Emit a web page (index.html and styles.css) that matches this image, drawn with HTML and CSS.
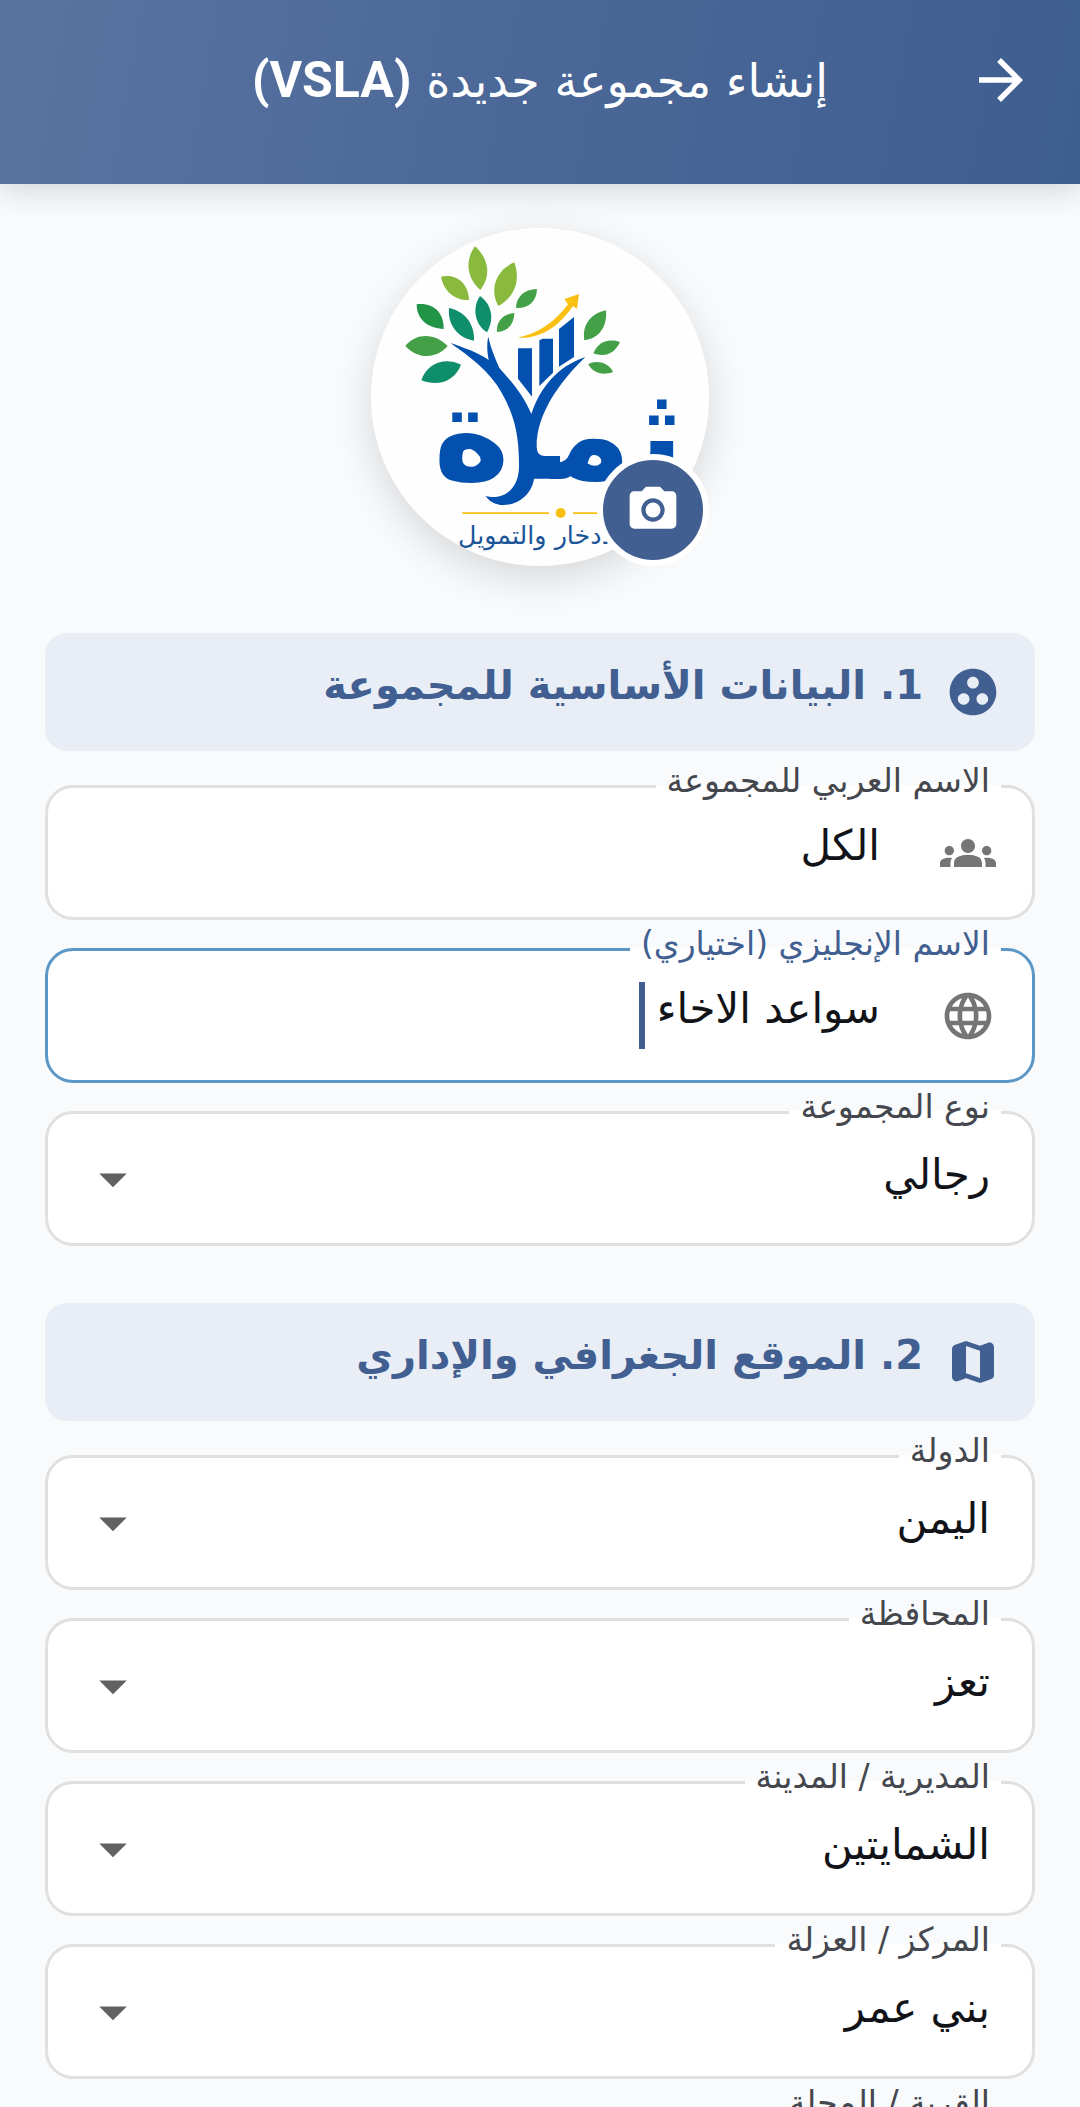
FILE: index.html
```html
<!DOCTYPE html>
<html lang="ar" dir="rtl">
<head>
 <meta charset="UTF-8">
 <meta name="viewport" content="width=device-width, initial-scale=1.0">
 <title>إنشاء مجموعة جديدة (VSLA)</title>
 <link rel="stylesheet" href="styles.css">
</head>
<body>
 <header class="topbar">
  <button class="back-button" type="button" aria-label="رجوع">
   <svg viewBox="0 0 24 24"><path d="M12 4l-1.41 1.41L16.17 11H4v2h12.17l-5.58 5.59L12 20l8-8z"/></svg>
  </button>
  <h1>إنشاء مجموعة جديدة <span class="latin">(VSLA)</span></h1>
 </header>

 <main class="content">
  <div class="avatar">
   <svg class="avatar-logo" viewBox="33 54 1014 1014" role="img" aria-label="ثمرة">
    <!-- листья -->
    <g fill="#8aba3d">
     <path d="M345 109C390 150 392 200 361 240C315 200 318 145 345 109z"/>
     <path d="M463 157C482 210 465 260 415 288C388 240 406 180 463 157z"/>
     <path d="M243 200C290 190 325 220 327 270C285 272 252 245 243 200z"/>
    </g>
    <g fill="#43a047">
     <path d="M531 237C530 275 505 296 468 294C468 262 492 238 531 237z"/>
     <path d="M463 309C462 343 443 364 411 366C408 335 428 312 463 309z"/>
     <path d="M136 407C170 368 225 368 263 408C230 448 170 448 136 407z"/>
     <path d="M738 301C742 350 718 385 673 391C665 345 693 310 738 301z"/>
     <path d="M780 396C765 430 735 443 700 430C715 395 745 385 780 396z"/>
     <path d="M685 463C705 450 745 455 759 486C730 497 698 490 685 463z"/>
    </g>
    <path fill="#219447" d="M170 283C220 277 252 308 251 357C205 355 170 330 170 283z"/>
    <g fill="#0f8e6c">
     <path d="M360 258C398 285 402 330 381 367C345 345 335 295 360 258z"/>
     <path d="M267 294C318 305 344 345 342 392C295 385 262 345 267 294z"/>
     <path d="M303 464C285 512 235 532 184 511C200 460 255 440 303 464z"/>
    </g>
    <path fill="#f9c013" d="M472 383C535 372 585 335 624 283L613 267L657 252L651 297L639 288C600 345 545 388 472 383z"/>
    <g fill="#0350ae">
     <path d="M474 415H516V560L474 506z"/>
     <path d="M538 391L548 386H579V488L538 528z"/>
     <path d="M597 357L642 321V441L597 470z"/>
     <path d="M271 399C315 414 355 428 386 450C380 420 381 395 385 380C394 420 406 445 418 474C460 520 492 560 514 612C540 535 590 470 676 441C600 515 530 610 530 710Q530 738 556 738H600V806H522C515 855 472 885 430 885C405 885 386 872 376 857C430 875 477 835 477 770C478 670 460 610 425 548C390 485 330 440 271 399z"/>
    </g>
    <g class="logo-word">
     <text x="450" y="806">ة</text>
     <text x="815" y="806">م&#8205;</text>
     <text x="972" y="806">ث&#8205;</text>
    </g>
    <g fill="#f9c013">
     <path d="M307 907H567V912H307zM639 907H760V912H639z"/>
     <circle cx="602" cy="909" r="15"/>
    </g>
    <text class="logo-tagline" x="294" y="1002">للادخار والتمويل</text>
   </svg>
   <button class="camera-button" type="button" aria-label="تغيير الصورة">
    <svg viewBox="0 0 24 24"><circle cx="12" cy="12" r="3.2"/><path d="M9 2L7.17 4H4c-1.1 0-2 .9-2 2v12c0 1.1.9 2 2 2h16c1.1 0 2-.9 2-2V6c0-1.1-.9-2-2-2h-3.17L15 2H9zm3 15c-2.76 0-5-2.24-5-5s2.24-5 5-5 5 2.24 5 5-2.24 5-5 5z"/></svg>
   </button>
  </div>

  <section class="section">
   <h2 class="section-title">
    <svg viewBox="0 0 24 24"><path d="M12 2C6.48 2 2 6.48 2 12s4.48 10 10 10 10-4.48 10-10S17.52 2 12 2zM8 17.5c-1.38 0-2.5-1.12-2.5-2.5s1.12-2.5 2.5-2.5 2.5 1.12 2.5 2.5-1.12 2.5-2.5 2.5zM9.5 8c0-1.38 1.12-2.5 2.5-2.5s2.5 1.12 2.5 2.5-1.12 2.5-2.5 2.5S9.5 9.38 9.5 8zm6.5 9.5c-1.38 0-2.5-1.12-2.5-2.5s1.12-2.5 2.5-2.5 2.5 1.12 2.5 2.5-1.12 2.5-2.5 2.5z"/></svg>
    <span>1. البيانات الأساسية للمجموعة</span>
   </h2>
   <div class="field">
    <label for="nameAr">الاسم العربي للمجموعة</label>
    <svg class="field-icon" viewBox="0 0 24 24"><path d="M12 12.75c1.63 0 3.07.39 4.24.9 1.08.48 1.76 1.56 1.76 2.73V18H6v-1.61c0-1.18.68-2.26 1.76-2.73 1.17-.52 2.61-.91 4.24-.91zM4 13c1.1 0 2-.9 2-2s-.9-2-2-2-2 .9-2 2 .9 2 2 2zm1.13 1.1c-.37-.06-.74-.1-1.13-.1-.99 0-1.93.21-2.78.58C.48 14.9 0 15.62 0 16.43V18h4.5v-1.61c0-.83.23-1.61.63-2.29zM20 13c1.1 0 2-.9 2-2s-.9-2-2-2-2 .9-2 2 .9 2 2 2zm4 3.43c0-.81-.48-1.53-1.22-1.85-.85-.37-1.79-.58-2.78-.58-.39 0-.76.04-1.13.1.4.68.63 1.46.63 2.29V18H24v-1.57zM12 6c1.66 0 3 1.34 3 3s-1.34 3-3 3-3-1.34-3-3 1.34-3 3-3z"/></svg>
    <input id="nameAr" type="text" value="الكل">
   </div>
   <div class="field active">
    <label for="nameEn">الاسم الإنجليزي (اختياري)</label>
    <svg class="field-icon" viewBox="0 0 24 24"><path d="M11.99 2C6.47 2 2 6.48 2 12s4.47 10 9.99 10C17.52 22 22 17.52 22 12S17.52 2 11.99 2zm6.93 6h-2.95c-.32-1.25-.78-2.45-1.38-3.56 1.84.63 3.37 1.91 4.33 3.56zM12 4.04c.83 1.2 1.48 2.53 1.91 3.96h-3.82c.43-1.43 1.08-2.76 1.91-3.96zM4.26 14C4.1 13.36 4 12.69 4 12s.1-1.36.26-2h3.38c-.08.66-.14 1.32-.14 2s.06 1.34.14 2H4.26zm.82 2h2.95c.32 1.25.78 2.45 1.38 3.56-1.84-.63-3.37-1.9-4.33-3.56zm2.95-8H5.08c.96-1.66 2.49-2.93 4.33-3.56C8.81 5.55 8.35 6.75 8.03 8zM12 19.96c-.83-1.2-1.48-2.53-1.91-3.96h3.82c-.43 1.43-1.08 2.76-1.91 3.96zM14.34 14H9.66c-.09-.66-.16-1.32-.16-2s.07-1.35.16-2h4.68c.09.65.16 1.32.16 2s-.07 1.34-.16 2zm.25 5.56c.6-1.11 1.06-2.31 1.38-3.56h2.95c-.96 1.65-2.49 2.93-4.33 3.56zM16.36 14c.08-.66.14-1.32.14-2s-.06-1.34-.14-2h3.38c.16.64.26 1.31.26 2s-.1 1.36-.26 2h-3.38z"/></svg>
    <input id="nameEn" type="text" value="سواعد الاخاء">
    <span class="caret"></span>
   </div>
   <div class="field">
    <label for="groupType">نوع المجموعة</label>
    <select id="groupType"><option>رجالي</option></select>
    <svg class="field-arrow" viewBox="0 0 24 24"><path d="M7 10l5 5 5-5z"/></svg>
   </div>
  </section>

  <section class="section">
   <h2 class="section-title">
    <svg viewBox="0 0 24 24"><path d="M14.65 4.98l-5-1.75c-.42-.15-.88-.15-1.3-.01L4.36 4.56C3.55 4.84 3 5.6 3 6.46v11.85c0 1.41 1.41 2.37 2.72 1.86l2.93-1.14c.22-.09.47-.09.69-.01l5 1.75c.42.15.88.15 1.3.01l3.99-1.34c.81-.27 1.36-1.04 1.36-1.9V5.69c0-1.41-1.41-2.37-2.72-1.86l-2.93 1.14c-.22.08-.46.09-.69.01zM15 18.89l-6-2.11V5.11l6 2.11v11.67z"/></svg>
    <span>2. الموقع الجغرافي والإداري</span>
   </h2>
   <div class="field">
    <label for="country">الدولة</label>
    <select id="country"><option>اليمن</option></select>
    <svg class="field-arrow" viewBox="0 0 24 24"><path d="M7 10l5 5 5-5z"/></svg>
   </div>
   <div class="field">
    <label for="governorate">المحافظة</label>
    <select id="governorate"><option>تعز</option></select>
    <svg class="field-arrow" viewBox="0 0 24 24"><path d="M7 10l5 5 5-5z"/></svg>
   </div>
   <div class="field">
    <label for="district">المديرية / المدينة</label>
    <select id="district"><option>الشمايتين</option></select>
    <svg class="field-arrow" viewBox="0 0 24 24"><path d="M7 10l5 5 5-5z"/></svg>
   </div>
   <div class="field">
    <label for="center">المركز / العزلة</label>
    <select id="center"><option>بني عمر</option></select>
    <svg class="field-arrow" viewBox="0 0 24 24"><path d="M7 10l5 5 5-5z"/></svg>
   </div>
   <div class="field">
    <label for="village">القرية / المحلة</label>
    <select id="village"><option></option></select>
    <svg class="field-arrow" viewBox="0 0 24 24"><path d="M7 10l5 5 5-5z"/></svg>
   </div>
  </section>
 </main>
</body>
</html>
```
FILE: styles.css
```css
* {
 box-sizing: border-box;
}
body {
 font-family: "DejaVu Sans", sans-serif;
 background: #f9fafc;
 color: #111318;
 height: 100vh;
 margin: 0;
 display: flex;
 flex-direction: column;
 overflow: hidden;
}
svg {
 display: block;
 fill: currentColor;
 flex: none;
}
button {
 border: none;
 padding: 0;
 cursor: pointer;
}

/* header */
.topbar {
 display: grid;
 grid-template-columns: 66px 1fr 66px;
 align-items: center;
 flex: none;
 height: 184px;
 padding: 0 46px 24px;
 background: linear-gradient(100deg, #5a74a1, #4a6797 50%, #3f5e90);
 color: #fff;
 box-shadow: 0 8px 28px rgba(0,0,0,0.14);
 position: relative;
 z-index: 1;
}
.topbar h1 {
 font-size: 46px;
 font-weight: 500;
 line-height: 64px;
 margin: 0;
 text-align: center;
 white-space: nowrap;
}
.topbar .latin {
 font-family: Roboto, sans-serif;
 font-size: 50px;
 font-weight: 700;
}
.back-button {
 background: none;
 color: #fff;
}
.back-button svg {
 width: 66px;
 height: 66px;
}

.content {
 flex: 1;
 min-height: 0;
 overflow-y: auto;
 scrollbar-width: none;
 padding: 44px 45px;
}

/* avatar */
.avatar {
 position: relative;
 width: 338px;
 height: 338px;
 margin: 0 auto 67px;
 border-radius: 50%;
 box-shadow: 0 12px 40px rgba(0,0,0,0.14);
}
.avatar-logo {
 width: 338px;
 height: 338px;
 border-radius: 50%;
 background: #fefefe;
}
.logo-word text {
 font-size: 390px;
 font-weight: 700;
 fill: #0350ae;
}
.logo-tagline {
 font-size: 76px;
 font-weight: 500;
 fill: #1a5598;
 text-anchor: end;
}
.camera-button {
 position: absolute;
 right: 0;
 bottom: 0;
 display: flex;
 align-items: center;
 justify-content: center;
 width: 112px;
 height: 112px;
 border: 6px solid #fff;
 border-radius: 50%;
 background: #415f91;
 color: #fff;
}
.camera-button svg {
 width: 56px;
 height: 56px;
}

/* sections */
.section {
 display: flex;
 flex-direction: column;
 gap: 28px;
 margin-bottom: 57px;
}
.section-title {
 display: flex;
 align-items: center;
 gap: 22px;
 height: 118px;
 margin: 0 0 6px;
 padding: 0 34px;
 border-radius: 22px;
 background: #e9edf5;
 color: #415f91;
 font-size: 40px;
 line-height: 48px;
}
.section-title svg {
 width: 56px;
 height: 56px;
}
.section-title span {
 padding-bottom: 14px;
}

/* fields */
.field {
 position: relative;
 display: flex;
 align-items: center;
 height: 135px;
 border: 3px solid #e0e0e0;
 border-radius: 28px;
 background: #fff;
}
.field label {
 position: absolute;
 top: -27px;
 right: 31px;
 padding: 0 11px;
 font-size: 33px;
 line-height: 40px;
 color: #44474e;
 background: linear-gradient(#fff, #fff) no-repeat 0 24px / 100% 3px;
}
.field input,
.field select {
 font-family: inherit;
 font-size: 42px;
 line-height: 56px;
 height: 72px;
 color: inherit;
 border: none;
 outline: none;
 background: none;
 margin: 0;
 padding: 0 0 14px;
}
.field input {
 flex: 1;
 min-width: 0;
}
.field select {
 flex: 1;
 appearance: none;
 padding: 0 42px 8px 0;
}
.field-icon {
 width: 56px;
 height: 56px;
 margin: 0 36px 0 60px;
 color: #757575;
}
.field-arrow {
 width: 66px;
 height: 66px;
 margin-left: 32px;
 color: #616161;
 pointer-events: none;
}
.field.active {
 border-color: #5a97c7;
}
.field.active label {
 color: #415f91;
}
.field.active input {
 flex: none;
 field-sizing: content;
}
.caret {
 width: 6px;
 height: 67px;
 margin-right: 12px;
 background: #415f91;
}
```
